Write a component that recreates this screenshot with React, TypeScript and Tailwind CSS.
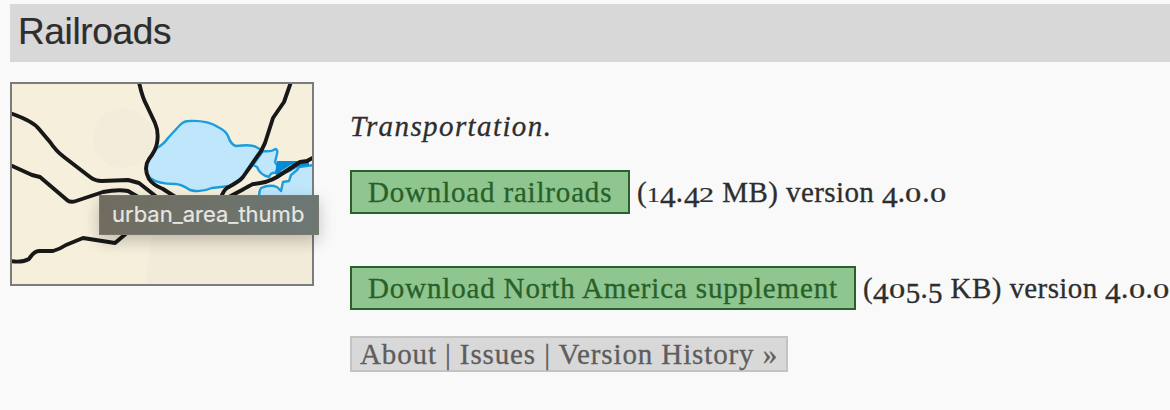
import React from "react";

const digitClass: Record<string, string> = {
  "0": "w-[16.8px] scale-x-[1.12] scale-y-[0.73]",
  "1": "w-[13px] scale-x-[0.88] scale-y-[0.73]",
  "2": "w-[15.4px] scale-x-[1.04] scale-y-[0.73]",
  "4": "w-[15.8px] translate-y-[5px] scale-x-[1.08]",
  "5": "w-[14.8px] translate-y-[5px]",
};

function OldStyle({ text }: { text: string }) {
  return (
    <>
      {text.split("").map((c, i) =>
        digitClass[c] ? (
          <span key={i} className={`inline-block origin-[0_25px] leading-[29px] tracking-normal ${digitClass[c]}`}>{c}</span>
        ) : (
          <React.Fragment key={i}>{c}</React.Fragment>
        ),
      )}
    </>
  );
}

function RailMap() {
  return (
    <svg viewBox="12 84 300 200" className="block h-[200px] w-[300px]" fill="none" strokeLinejoin="round">
      <path fill="#f6efdc" d="M12 84h300v200H12z" />
      <circle cx="123" cy="138" r="30" fill="#f4ecda" />
      <path fill="#f3ebd9" d="M153 235H312V284H147Q146 260 153 235Z" />
      <g fill="#bfe6fb" stroke="#1c9ddd" strokeWidth="2.4">
        <path d="M157 148Q164 144 168 138L180 125Q184 121 189 121Q207 120 218 127Q226 131 228 136Q231 145 236 146Q252 144 256 147L263 151L253 165L243 177Q237 184 230 186L212 188Q200 193 190 190Q181 184 175 184Q158 184 150 178Q144 171 147 162Z" />
        <path d="M263 151Q272 152 275 149Q278 149 277 154L275 162L278 167L276 173Q271 172 269 177Q260 175 257 167L253 165Z" />
        <path d="M314 165L299 167L297 170L291 175L289 181L283 182L281 191L277 187Q270 184 261 188Q258 193 260 198H314Z" />
      </g>
      <path d="M277 161H300L309 160V165L298 167L290 172L280 176L275 174Z" fill="#078bd6" />
      <path d="M281 172L292 165" stroke="#8fd2f2" strokeWidth="1.5" />
      <g stroke="#171817" strokeWidth="3.9">
        <path d="M10 113Q33 121 39 129L50 142Q56 151 64 157L90 177Q95 181 102 181L128 180L139 183L158 198" />
        <path d="M10 165L32 175L40 177L67 200Q70 203 76 201L103 192Q118 189 128 191L140 198" />
        <path d="M10 261Q22 263 29 259Q34 251 39 251H53Q60 249 66 245L83 238L115 243L128 232" />
        <path d="M139 82Q142 97 147 106L155 123Q159 132 157 143Q156 150 149 159Q143 168 149 179Q153 185 163 189L177 198" />
        <path d="M291 82L284 102Q275 115 273 118L265 143Q262 151 256 158L243 177Q240 181 227 188Q223 191 221 198" />
        <path d="M314 157L307 161L300 162L277 177Q267 183 253 184Q249 186 242 190L227 198" />
      </g>
    </svg>
  );
}

export default function App() {
  return (
    <main className="h-[410px] overflow-hidden bg-[#f9f9f9] pt-1 pl-2.5 text-[#2d2e2d]">
      <h1 className="flex h-[58px] items-center bg-[#d8d8d8] pl-2 font-['Liberation_Sans',Arial,sans-serif] text-[37px] tracking-[-0.35px] [-webkit-text-stroke:0.2px]">
        <span className="-mt-0.5">Railroads</span>
      </h1>
      <div className="mt-5 flex items-start gap-9">
        <figure className="relative shrink-0 border-2 border-[#7b7c7e]">
          <RailMap />
          <figcaption className="absolute top-[111px] left-[87px] flex h-10 w-[220px] items-center border border-[#777971] bg-linear-to-r from-[#706c5f] to-[#6c7774] pl-3 font-['Inter',sans-serif] text-[22px] text-[#e6e6e2] shadow-[0_6px_16px_rgba(0,0,0,0.22)] [-webkit-text-stroke:0.2px]">
            <span className="-mt-0.5 whitespace-nowrap">urban_area_thumb</span>
          </figcaption>
        </figure>
        <section className="flex flex-col items-start font-['Liberation_Serif',serif] text-[29px] leading-9 whitespace-nowrap [-webkit-text-stroke:0.3px]">
          <p className="mt-[26px] text-[29px] tracking-[1.4px] italic">Transportation.</p>
          <div className="mt-[26px] flex items-center">
            <a className="h-11 w-[280px] border-2 border-[#2b602d] bg-[#8fc58f] pl-4 leading-[41px] tracking-[0.82px] text-[#286029]">Download railroads</a>
            <span className="ml-[7px] h-11 leading-[45px] tracking-[0.4px]"><OldStyle text="(14.42 MB) version 4.0.0" /></span>
          </div>
          <div className="mt-[52px] flex items-center">
            <a className="h-11 w-[506px] border-2 border-[#2b602d] bg-[#8fc58f] pl-4 leading-[41px] tracking-[0.84px] text-[#286029]">Download North America supplement</a>
            <span className="ml-[7px] h-11 leading-[45px] tracking-[0.4px]"><OldStyle text="(405.5 KB) version 4.0.0" /></span>
          </div>
          <nav className="mt-[26px] h-9 w-[438px] border-2 border-[#c3c3c3] bg-[#d8d8d8] pl-2 leading-[33px] tracking-[0.88px] text-[#5d5d5d]">
            <a>About</a> | <a>Issues</a> | <a>Version History »</a>
          </nav>
        </section>
      </div>
    </main>
  );
}
